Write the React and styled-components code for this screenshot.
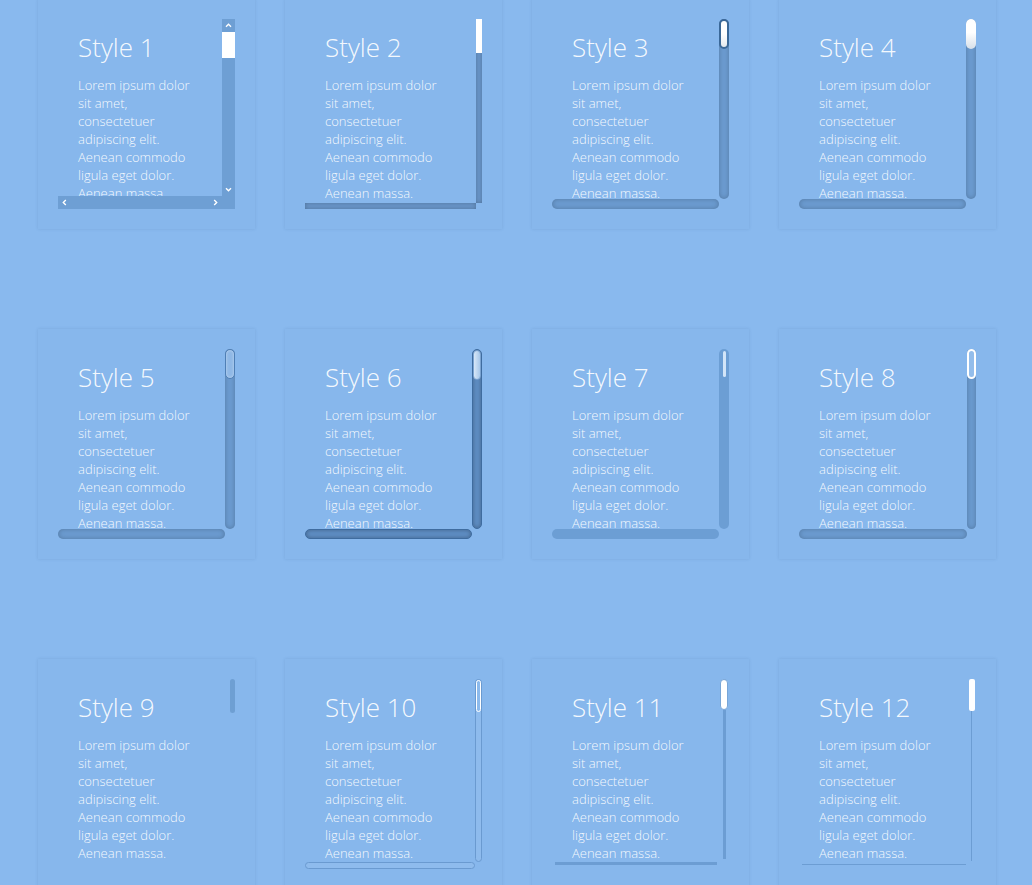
import React from 'react';
import styled, { createGlobalStyle, css } from 'styled-components';

const GlobalStyle = createGlobalStyle`
  html, body {
    margin: 0;
    padding: 0;
    background: #89b9ee;
  }
  body {
    font-family: "Open Sans", "Liberation Sans", sans-serif;
  }
`;

const LOREM =
  'Lorem ipsum dolor sit amet, consectetuer adipiscing elit. Aenean commodo ligula eget dolor. Aenean massa.';

// sizes of the bars for each style: v = vertical bar width, h = horizontal bar height
const STYLES = [
  { id: 1, v: 13, h: 13, corner: true, arrows: true },
  { id: 2, v: 6, h: 6 },
  { id: 3, v: 10, h: 10 },
  { id: 4, v: 10, h: 10 },
  { id: 5, v: 10, h: 10 },
  { id: 6, v: 10, h: 10 },
  { id: 7, v: 10, h: 10 },
  { id: 8, v: 9, h: 10 },
  { id: 9, v: 5, h: 0 },
  { id: 10, v: 7, h: 7 },
  { id: 11, v: 10, h: 10 },
  { id: 12, v: 8, h: 8 },
];

const inset = css`
  background: #6b9bd0;
  border-radius: 10px;
  box-shadow: inset 0 0 5px rgba(0, 0, 0, 0.22);
`;

const line = (w) => css`
  background: ${({ $axis }) =>
    $axis === 'v'
      ? `linear-gradient(to right, transparent calc(50% - ${w / 2}px), #6c9dd3 calc(50% - ${w / 2}px), #6c9dd3 calc(50% + ${w / 2}px), transparent calc(50% + ${w / 2}px))`
      : `linear-gradient(to bottom, transparent calc(50% - ${w / 2}px), #6c9dd3 calc(50% - ${w / 2}px), #6c9dd3 calc(50% + ${w / 2}px), transparent calc(50% + ${w / 2}px))`};
`;

const trackStyles = {
  1: css`background: #6e9fd4;`,
  2: css`
    background: #6a97cb;
    box-shadow: inset 0 0 4px rgba(0, 0, 0, 0.25);
  `,
  3: inset,
  4: inset,
  5: inset,
  6: css`
    background: #5e8dc3;
    border: 1px solid #3f6c9f;
    border-radius: 10px;
    box-shadow: inset 0 0 4px rgba(0, 0, 0, 0.3);
  `,
  7: css`
    background: #6c9ed4;
    border-radius: 10px;
  `,
  8: inset,
  9: css`background: transparent;`,
  10: css`
    border: 1px solid #6a9ad0;
    background: rgba(255, 255, 255, 0.06);
    border-radius: 4px;
  `,
  11: css`
    ${line(3)}
    ${({ $axis }) => ($axis === 'h' ? 'margin: 0 2px 0 3px;' : 'padding-bottom: 2px;')}
  `,
  12: css`
    ${line(1)}
    ${({ $axis }) => ($axis === 'h' ? 'margin: 0 2px 0 3px;' : 'padding-bottom: 2px;')}
  `,
};

const thumbStyles = {
  1: css`
    height: 26px;
    background: #fff;
  `,
  2: css`
    height: 34px;
    background: #fff;
  `,
  3: css`
    height: 30px;
    background: linear-gradient(#ffffff 50%, #e4e9ee);
    border: 2px solid #3a6898;
    border-radius: 10px;
  `,
  4: css`
    height: 30px;
    background: linear-gradient(#ffffff 45%, #d6dfe9);
    border-radius: 10px;
  `,
  5: css`
    height: 30px;
    background: #8fb8e6;
    border: 1px solid #4f7fb5;
    border-radius: 10px;
    box-shadow: inset 0 0 3px rgba(255, 255, 255, 0.5);
  `,
  6: css`
    height: 30px;
    background: linear-gradient(to right, #d7e7f8, #a8c8ea);
    border: 1px solid #7aa3d1;
    border-radius: 10px;
  `,
  7: css`
    width: 3px;
    height: 26px;
    margin: 2px auto 0;
    background: #d3e5f8;
    border-radius: 2px;
  `,
  8: css`
    height: 30px;
    background: #93bdeb;
    border: 2px solid #fff;
    border-radius: 10px;
  `,
  9: css`
    height: 34px;
    background: #6e9fd3;
    border-radius: 3px;
  `,
  10: css`
    height: 32px;
    background: #8cbaec;
    border: 1px solid #fff;
    border-radius: 4px;
  `,
  11: css`
    width: 8px;
    height: 31px;
    margin: 0 auto;
    background: #fff;
    border: 1px solid #78a6d8;
    border-radius: 4px;
  `,
  12: css`
    width: 6px;
    height: 32px;
    margin: 0 auto;
    background: #fff;
    border-radius: 2px;
  `,
};

const Grid = styled.div`
  display: grid;
  grid-template-columns: repeat(4, 217px);
  column-gap: 30px;
  row-gap: 100px;
  margin-top: -1px;
  padding: 0 0 40px 38px;
`;

const Card = styled.div`
  box-sizing: border-box;
  width: 217px;
  height: 230px;
  padding: 20px;
  background: #87b7ec;
  box-shadow: 0 0 3px rgba(40, 80, 130, 0.15);
`;

const ScrollBox = styled.div`
  display: grid;
  height: 190px;
  grid-template-columns: minmax(0, 1fr) ${({ $v }) => $v}px;
  grid-template-rows: minmax(0, 1fr) ${({ $h }) => $h}px;
`;

const Content = styled.div`
  min-height: 0;
  overflow: hidden;
  padding: 10px 0 0 20px;
  color: rgba(255, 255, 255, 0.93);
`;

const Title = styled.h2`
  margin: 0 0 11px;
  font-size: 26px;
  font-weight: 300;
  line-height: 36px;
`;

const Text = styled.p`
  width: 125px;
  margin: 0;
  font-size: 13px;
  font-weight: 300;
  line-height: 18px;
`;

const Track = styled.div`
  box-sizing: border-box;
  display: flex;
  flex-direction: ${({ $axis }) => ($axis === 'v' ? 'column' : 'row')};
  justify-content: space-between;
  min-width: 0;
  min-height: 0;
  ${({ $s }) => trackStyles[$s]}
`;

const Thumb = styled.div`
  box-sizing: border-box;
  flex: none;
  ${({ $s }) => thumbStyles[$s]}
`;

const Fill = styled.div`
  flex: 1;
`;

const Corner = styled.div`
  background: ${({ $filled }) => ($filled ? '#6e9fd4' : 'transparent')};
`;

const ArrowButton = styled.div`
  flex: none;
  width: 13px;
  height: 13px;
  display: flex;
  align-items: center;
  justify-content: center;
`;

const rot = { up: 0, right: 90, down: 180, left: 270 };

const Arrow = ({ dir }) => (
  <ArrowButton>
    <svg width="7" height="7" viewBox="0 0 7 7" style={{ transform: `rotate(${rot[dir]}deg)` }}>
      <polyline points="1,4.8 3.5,2.3 6,4.8" fill="none" stroke="#fff" strokeWidth="1.4" />
    </svg>
  </ArrowButton>
);

const Panel = ({ cfg }) => (
  <Card>
    <ScrollBox $v={cfg.v} $h={cfg.h}>
      <Content>
        <Title>Style {cfg.id}</Title>
        <Text>{LOREM}</Text>
      </Content>
      <Track $axis="v" $s={cfg.id}>
        {cfg.arrows && <Arrow dir="up" />}
        <Thumb $s={cfg.id} />
        <Fill />
        {cfg.arrows && <Arrow dir="down" />}
      </Track>
      {cfg.h > 0 && (
        <Track $axis="h" $s={cfg.id}>
          {cfg.arrows && <Arrow dir="left" />}
          {cfg.arrows && <Arrow dir="right" />}
        </Track>
      )}
      {cfg.h > 0 && <Corner $filled={cfg.corner} />}
    </ScrollBox>
  </Card>
);

export default function App() {
  return (
    <>
      <GlobalStyle />
      <Grid>
        {STYLES.map((cfg) => (
          <Panel key={cfg.id} cfg={cfg} />
        ))}
      </Grid>
    </>
  );
}
